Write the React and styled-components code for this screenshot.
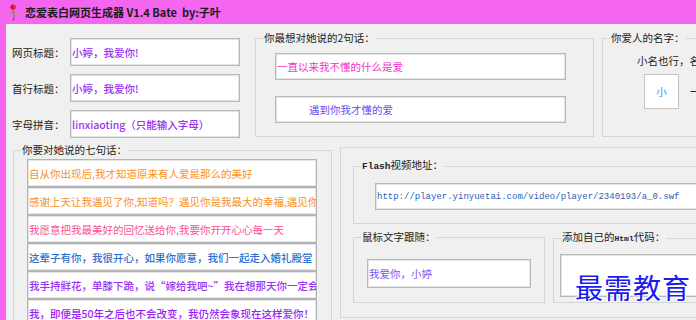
import React from 'react';
import styled, { createGlobalStyle } from 'styled-components';

const sevenLines = [
  { text: '自从你出现后,我才知道原来有人爱是那么的美好', color: '#f7901e' },
  { text: '感谢上天让我遇见了你,知道吗？遇见你是我最大的幸福,遇见你我才懂得爱', color: '#f7901e' },
  { text: '我愿意把我最美好的回忆送给你,我要你开开心心每一天', color: '#fb4f93' },
  { text: '这辈子有你，我很开心，如果你愿意，我们一起走入婚礼殿堂', color: '#2f6fcf', bold: true },
  { text: '我手持鲜花，单膝下跪，说“嫁给我吧~”我在想那天你一定会答应', color: '#9a33f5', bold: true },
  { text: '我，即便是50年之后也不会改变，我仍然会象现在这样爱你！', color: '#9a1ff5', bold: true },
];

const App = () => {
  return (
    <Window>
      <GlobalStyle />
      <TitleBar>
        <svg width="10" height="17" viewBox="0 0 10 17">
          <circle cx="4" cy="3" r="2.6" fill="#d8102a" />
          <circle cx="5.6" cy="2.4" r="1.4" fill="#f03048" />
          <path d="M4 5.5 L5 11 L4.5 16" stroke="#5a8a2a" strokeWidth="1" fill="none" />
          <ellipse cx="2.6" cy="9" rx="1.6" ry="1" fill="#8ab030" />
          <ellipse cx="7" cy="11" rx="1.5" ry="1" fill="#c8a030" />
          <circle cx="4.5" cy="15.5" r="1" fill="#c03040" />
        </svg>
        <Title>恋爱表白网页生成器 V1.4 Bate  by:子叶</Title>
      </TitleBar>

      <Client>
        <TopRow>
          <FormCol>
            <FormRow>
              <Label>网页标题：</Label>
              <TextBox $w="170px" $h="28px" $color="#9b30f2" $bold value="小婷，我爱你!" readOnly />
            </FormRow>
            <FormRow>
              <Label>首行标题：</Label>
              <TextBox $w="170px" $h="28px" $color="#9b30f2" $bold value="小婷，我爱你!" readOnly />
            </FormRow>
            <FormRow>
              <Label>字母拼音：</Label>
              <TextBox $w="170px" $h="28px" $color="#9b30f2" $bold value="linxiaoting（只能输入字母）" readOnly />
            </FormRow>
          </FormCol>

          <GroupBox $w="339px" $ml="15px">
            <Legend>你最想对她说的2句话：</Legend>
            <GroupBody $pad="8px 0 13px 19px" $gap="16px">
              <TextBox $w="291px" $h="27px" $color="#f530d0" value="一直以来我不懂的什么是爱" readOnly />
              <TextBox $w="291px" $h="27px" $color="#6a4cf0" $indent="33px" value="遇到你我才懂的爱" readOnly />
            </GroupBody>
          </GroupBox>

          <GroupBox $w="200px" $ml="8px">
            <Legend>你爱人的名字：</Legend>
            <GroupBody $pad="9px 0 27px 0" $gap="6px">
              <Hint>小名也行，名字也行</Hint>
              <NameRow>
                <NameBox>小</NameBox>
                <Dash>一</Dash>
                <NameBox>婷</NameBox>
              </NameRow>
            </GroupBody>
          </GroupBox>
        </TopRow>

        <BottomRow>
          <GroupBox $w="319px" $ml="1px">
            <Legend>你要对她说的七句话：</Legend>
            <GroupBody $pad="2px 0 0 13px">
              {sevenLines.map((line, i) => (
                <LineBox key={i} $color={line.color} $bold={line.bold} value={line.text} readOnly />
              ))}
            </GroupBody>
          </GroupBox>

          <Panel>
            <GroupBox $w="400px">
              <Legend><Mono>Flash</Mono>视频地址：</Legend>
              <GroupBody $pad="9px 0 13px 21px">
                <UrlBox value="http://player.yinyuetai.com/video/player/2340193/a_0.swf" readOnly />
              </GroupBody>
            </GroupBox>

            <PanelRow>
              <GroupBox $w="192px">
                <Legend>鼠标文字跟随：</Legend>
                <GroupBody $pad="15px 0 12px 13px">
                  <TextBox $w="164px" $h="29px" $color="#7a55f5" value="我爱你，小婷" readOnly />
                </GroupBody>
              </GroupBox>
              <GroupBox $w="200px">
                <Legend>添加自己的<Mono $small>Html</Mono>代码：</Legend>
                <GroupBody $pad="8px 0 5px 6px">
                  <TextBox $w="180px" $h="43px" $color="#333" value="" readOnly />
                </GroupBody>
              </GroupBox>
            </PanelRow>
          </Panel>
        </BottomRow>
      </Client>

      <Watermark>最需教育</Watermark>
    </Window>
  );
};

const GlobalStyle = createGlobalStyle`
  html, body {
    margin: 0;
    padding: 0;
    background: #f0f0f0;
  }
  body {
    font-family: "Noto Sans CJK SC", sans-serif;
  }
`;

const Window = styled.div`
  position: relative;
  width: 696px;
  height: 320px;
  overflow: hidden;
  background: #f465f0;
  font-family: "Noto Sans CJK SC", sans-serif;
`;

const TitleBar = styled.div`
  height: 24px;
  display: flex;
  align-items: center;
  gap: 6px;
  padding-left: 9px;
`;

const Title = styled.span`
  font-size: 11px;
  font-weight: 700;
  color: #1a1a1a;
  white-space: pre;
`;

const Client = styled.div`
  width: 760px;
  height: 296px;
  margin-left: 6px;
  padding-left: 6px;
  box-sizing: border-box;
  background: #f0f0f0;
`;

const TopRow = styled.div`
  display: flex;
  align-items: flex-start;
  height: 119px;
  padding-top: 7px;
  box-sizing: border-box;
`;

const FormCol = styled.div`
  display: flex;
  flex-direction: column;
  gap: 8px;
  width: 228px;
  margin-top: 7px;
  flex-shrink: 0;
`;

const FormRow = styled.div`
  display: flex;
  align-items: center;
`;

const Label = styled.label`
  width: 58px;
  font-size: 10.5px;
  color: #222;
`;

const TextBox = styled.input`
  display: block;
  width: ${p => p.$w};
  height: ${p => p.$h};
  margin: 0;
  padding: 0 0 0 ${p => p.$indent || '1px'};
  box-sizing: border-box;
  border: 1px solid #b9b9b9;
  box-shadow: inset 0 0 0 1px #e4e4e4;
  background: #fff;
  color: ${p => p.$color};
  font-family: "Noto Sans CJK SC", sans-serif;
  font-size: 10.5px;
  font-weight: ${p => (p.$bold ? 500 : 400)};
  outline: none;
`;

const GroupBox = styled.fieldset`
  margin: ${p => p.$mt || 0} 0 0 ${p => p.$ml || 0};
  padding: 0;
  width: ${p => p.$w};
  min-width: 0;
  flex-shrink: 0;
  box-sizing: border-box;
  border: 1px solid #d6d6d6;
`;

const Legend = styled.legend`
  margin-left: 7px;
  padding: 0 1px;
  font-size: 10.5px;
  line-height: 14px;
  color: #222;
  white-space: nowrap;
`;

const Mono = styled.span`
  font-family: "Liberation Mono", monospace;
  font-weight: 700;
  font-size: ${p => (p.$small ? '8px' : '9.5px')};
`;

const GroupBody = styled.div`
  display: flex;
  flex-direction: column;
  gap: ${p => p.$gap || 0};
  padding: ${p => p.$pad};
`;

const Hint = styled.div`
  padding-left: 34px;
  font-size: 10.5px;
  line-height: 14px;
  color: #222;
  white-space: nowrap;
`;

const NameRow = styled.div`
  display: flex;
  align-items: center;
  gap: 11px;
  padding-left: 41px;
`;

const NameBox = styled.div`
  width: 35px;
  height: 35px;
  box-sizing: border-box;
  display: flex;
  align-items: center;
  justify-content: center;
  border: 1px solid #c4c4c4;
  background: #fff;
  color: #3399f5;
  font-size: 10.5px;
`;

const Dash = styled.span`
  font-size: 12px;
  color: #222;
`;

const BottomRow = styled.div`
  display: flex;
  align-items: flex-start;
`;

const LineBox = styled.input`
  display: block;
  width: 290px;
  height: 28px;
  margin: 0;
  padding: 0 0 0 1px;
  box-sizing: border-box;
  border: 1px solid #b4b4b4;
  box-shadow: inset 0 0 0 1px #e6e6e6;
  background: #fff;
  color: ${p => p.$color};
  font-family: "Noto Sans CJK SC", sans-serif;
  font-size: 10.5px;
  font-weight: ${p => (p.$bold ? 500 : 400)};
  outline: none;
`;

const Panel = styled.div`
  width: 420px;
  margin: 4px 0 0 8px;
  padding: 10px 0 14px 12px;
  box-sizing: border-box;
  border: 1px solid #d6d6d6;
`;

const PanelRow = styled.div`
  display: flex;
  gap: 8px;
  margin-top: 6px;
`;

const UrlBox = styled.input`
  display: block;
  width: 360px;
  height: 27px;
  margin: 0;
  padding: 0 0 0 1px;
  box-sizing: border-box;
  border: 1px solid #b9b9b9;
  box-shadow: inset 0 0 0 1px #e4e4e4;
  background: #fff;
  color: #2d5fb5;
  font-family: "Liberation Mono", monospace;
  font-size: 9px;
  outline: none;
`;

const Watermark = styled.div`
  position: absolute;
  left: 575px;
  top: 269px;
  font-size: 28px;
  line-height: 36px;
  letter-spacing: 1px;
  color: #1b1bef;
  text-shadow: 1px 1px 0 #fff, -1px -1px 0 #fff, 1px -1px 0 #fff, -1px 1px 0 #fff;
`;

export default App;
